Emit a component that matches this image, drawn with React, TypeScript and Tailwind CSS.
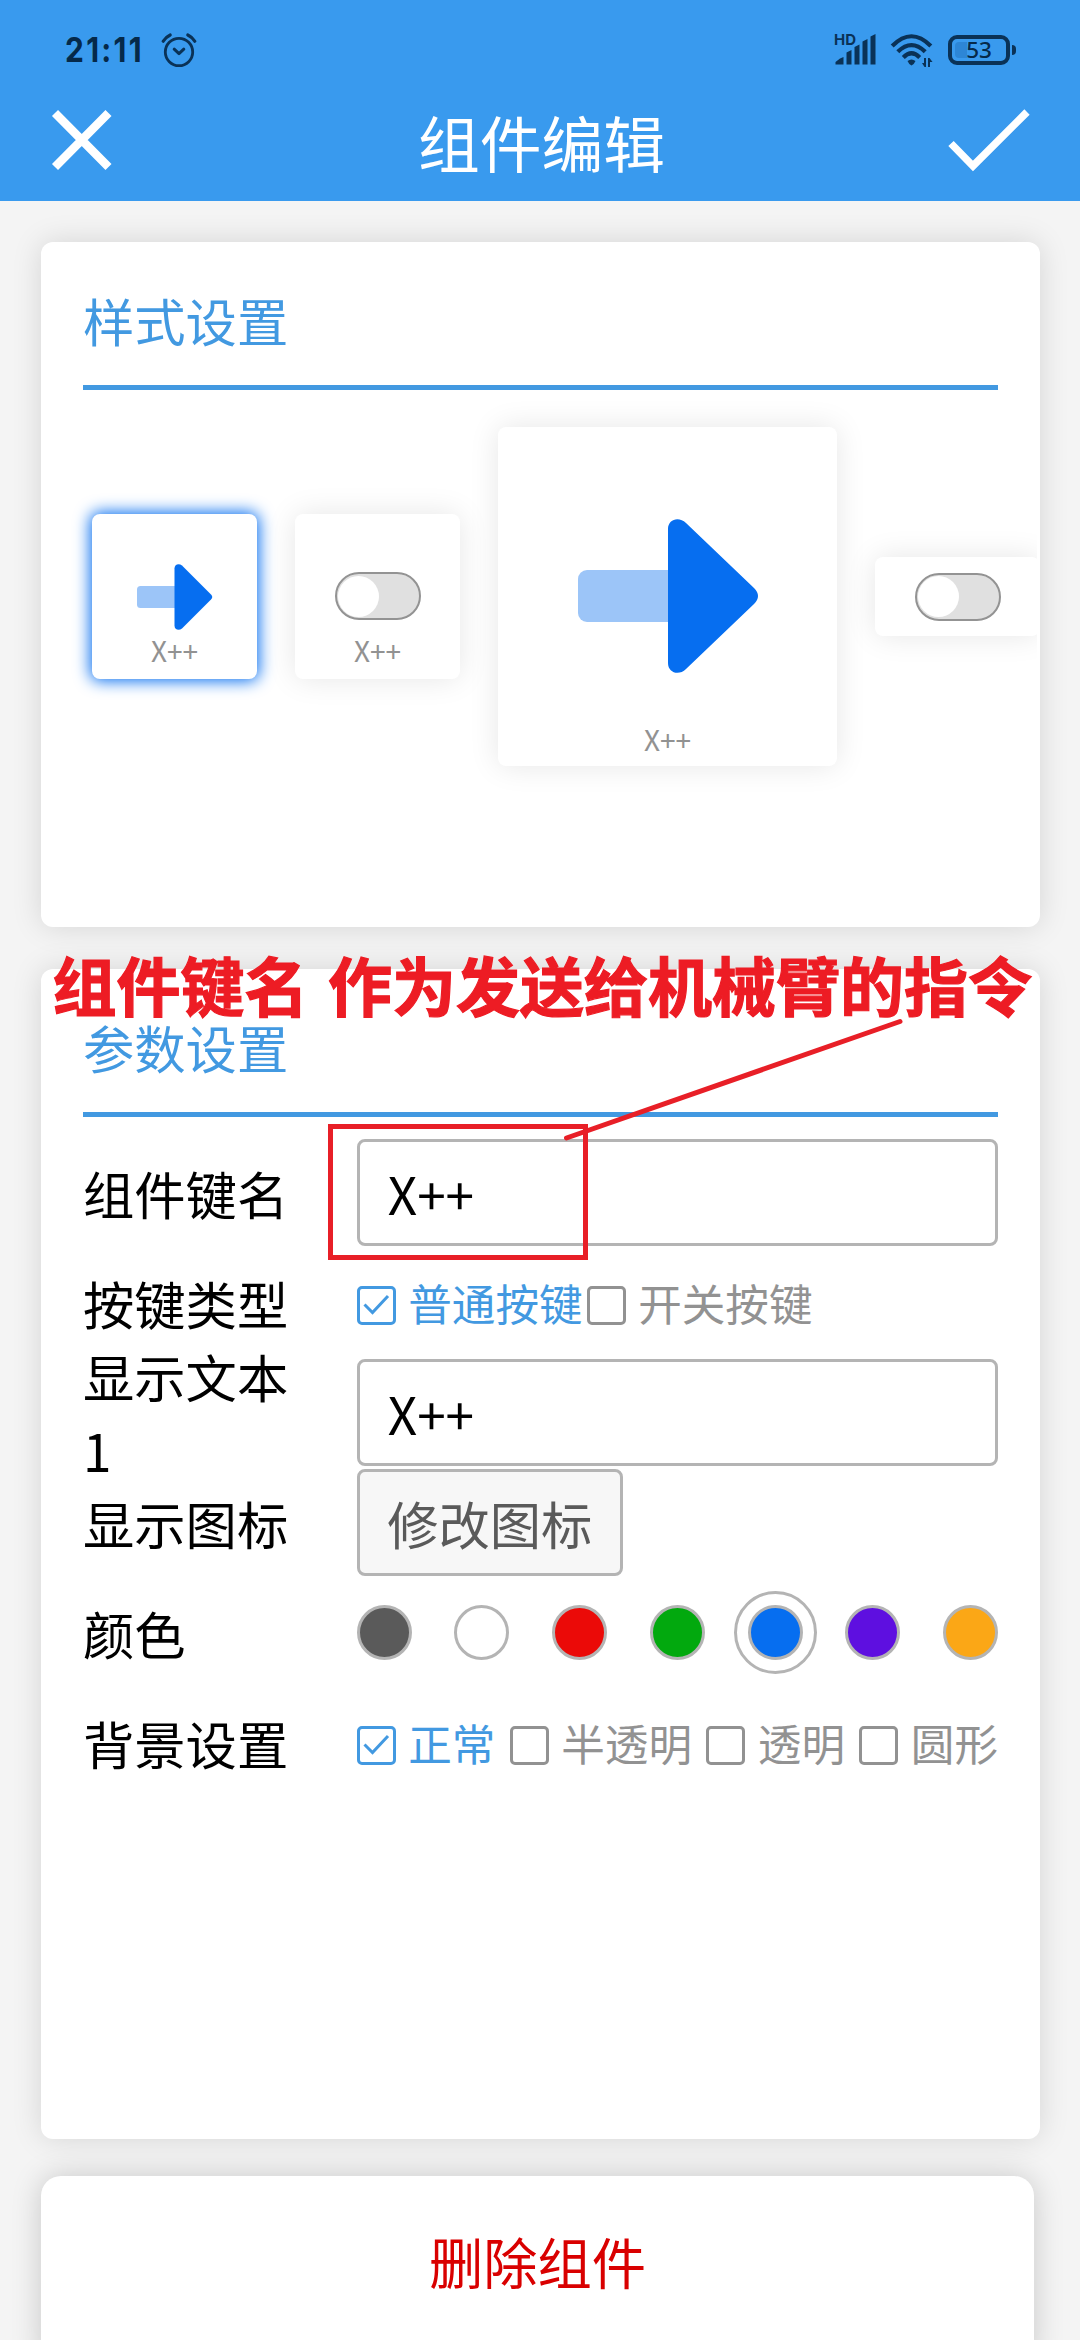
import type { ReactNode } from "react";

function StatusBar() {
  return (
    <div className="flex h-[100px] shrink-0 justify-between pl-[65px] pr-[64px] text-[#0a3257]">
      <div className="flex h-[100px] items-center">
        <span className="w-[96px] font-['Inter'] text-[34px] leading-[40px] font-bold text-[#05294a]">
          <span className="inline-block origin-left scale-x-[0.88] tracking-[2.6px]">21:11</span>
        </span>
        <svg width="36" height="36" viewBox="0 0 36 36" fill="none" stroke="currentColor" strokeLinecap="round" strokeLinejoin="round">
          <circle cx="18" cy="20" r="13.7" strokeWidth="2.8" />
          <path d="M13.2 17.2 18 21.6 22.8 17.2" strokeWidth="3" />
          <path d="M2.2 9.2Q4.6 5.2 9.2 3M26.8 3Q31.4 5.2 33.8 9.2" strokeWidth="3.2" />
        </svg>
      </div>
      <div className="flex h-[100px] items-center gap-[14px]">
        <svg width="44" height="46" viewBox="0 -5 44 46" fill="currentColor">
          <text x="2" y="13" fontFamily="Inter" fontSize="15" fontWeight="700" textLength="22">HD</text>
          <path d="M3.5 32.5V30L8 26.5 11.5 25V32.5ZM14.5 32.5V20.5L19.5 18V32.5ZM22.5 32.5V15L27.5 12.5V32.5ZM30.5 32.5V9.5L35.5 7V32.5ZM38.5 32.5V4.5L43.5 2V32.5Z" />
        </svg>
        <svg width="44" height="36" viewBox="0 0 44 36" fill="none" stroke="currentColor">
          <path d="M2.2 14Q21.5-5.5 40.8 14" strokeWidth="4.2" />
          <path d="M7.8 19.8Q21.5 6.4 35.2 19.8" strokeWidth="4.2" />
          <path d="M13.3 25.4Q21.5 17.2 29.7 25.4" strokeWidth="4.2" />
          <path d="M17.5 29Q21.5 26 25.5 29Q24 32.5 21.5 33.5Q19 32.5 17.5 29Z" fill="currentColor" stroke="none" />
          <path d="M36 26V35H34.5L32 31H34V26ZM38 35V26H39.5L42.5 30H40V35Z" fill="currentColor" stroke="none" />
        </svg>
        <div className="flex items-center gap-[2px]">
          <div className="relative flex h-[30px] w-[62px] items-center justify-center rounded-[9px] border-4 border-[#0a3257]">
            <div className="absolute top-[3px] left-[3px] h-4 w-3 rounded-l bg-[#2d86d6]" />
            <span className="relative font-['Noto_Sans'] text-[22.5px] leading-none font-medium text-[#05294a]">53</span>
          </div>
          <div className="h-[10px] w-1 rounded-r bg-[#0a3257]" />
        </div>
      </div>
    </div>
  );
}

function Header() {
  return (
    <header className="h-[201px] bg-[#399aee]">
      <StatusBar />
      <div className="flex h-[82px] items-center justify-between pr-[48px] pl-[51px]">
        <svg width="84" height="64" viewBox="0 0 84 64" fill="none" stroke="#fff" strokeWidth="8.5">
          <path d="M4 4 57.5 58M57.5 4 4 58" />
        </svg>
        <h1 className="text-[61.8px] leading-[82px] text-white">组件编辑</h1>
        <svg width="84" height="66" viewBox="0 0 84 66" fill="none" stroke="#fff" strokeWidth="7.5">
          <path d="M3 35.5 25 58 79 4" />
        </svg>
      </div>
    </header>
  );
}

function SectionTitle({ children }: { children: ReactNode }) {
  return (
    <h2 className="mx-[42px] h-[148px] border-b-[5px] border-[#4299e1] pt-[41px] text-[51.3px] leading-[74px] text-[#4299e1]">
      {children}
    </h2>
  );
}

function Toggle() {
  return (
    <div className="h-[48px] w-[86px] shrink-0 rounded-full border-2 border-[#939393] bg-[#e0e0e0] p-[1.5px]">
      <div className="size-[41px] rounded-full bg-white" />
    </div>
  );
}

function Arrow({ large = false }: { large?: boolean }) {
  if (large) {
    return (
      <svg width="180" height="154" viewBox="0 0 180 154">
        <rect y="51" width="110" height="52" rx="9" fill="#9cc5f8" />
        <path d="M90 10C90 0 101 -3 108 4L176 69Q184 77 176 85L108 150C101 157 90 154 90 144Z" fill="#066ef0" />
      </svg>
    );
  }
  return (
    <svg width="76" height="66" viewBox="0 0 76 66">
      <rect y="22" width="50" height="22" rx="3.5" fill="#9cc5f8" />
      <path d="M37.5 4.5C37.5 0 42 -1 45 1.5L74 30.5Q76.5 33 74 35.5L45 64.5C42 67 37.5 66 37.5 61.5Z" fill="#066ef0" />
    </svg>
  );
}

function StylePicker() {
  return (
    <div className="mr-[3px] flex h-[413px] items-center gap-[38px] overflow-hidden pl-[51px] text-center text-[28px] leading-[40px] text-[#929292]">
      <div className="flex size-[165px] shrink-0 flex-col items-center rounded-lg bg-white pt-[50px] shadow-[0_0_16px_2px_#066ef0]">
        <Arrow />
        <span>X++</span>
      </div>
      <div className="flex size-[165px] shrink-0 flex-col items-center rounded-lg bg-white pt-[58px] shadow-[0_0_30px_rgba(0,0,0,0.1)]">
        <Toggle />
        <span className="mt-[10px]">X++</span>
      </div>
      <div className="flex size-[339px] shrink-0 flex-col items-center rounded-lg bg-white pt-[92px] shadow-[0_0_30px_rgba(0,0,0,0.1)]">
        <Arrow large />
        <span className="mt-[46px]">X++</span>
      </div>
      <div className="flex h-[79px] w-[165px] shrink-0 items-center justify-center rounded-lg bg-white shadow-[0_0_30px_rgba(0,0,0,0.1)]">
        <Toggle />
      </div>
    </div>
  );
}

function Check({ label, checked = false }: { label: string; checked?: boolean }) {
  return (
    <div className={checked ? "flex items-center text-[#4299e1]" : "flex items-center text-[#929292]"}>
      <div className="mt-[6px] mr-[12.5px] flex size-[39px] items-center justify-center rounded-[5px] border-3 border-current">
        {checked && (
          <svg width="27" height="22" viewBox="0 0 27 22" fill="none" stroke="currentColor" strokeWidth="3">
            <path d="M1.5 10.5 9.5 18.5 25 2" />
          </svg>
        )}
      </div>
      <span className="text-[43.6px] leading-[64px]">{label}</span>
    </div>
  );
}

function Field({ label, children }: { label: string; children: ReactNode }) {
  return (
    <div className="flex h-[110px] items-center">
      <div className="w-[208px] pt-[2px] text-[51.3px] leading-[74px] text-black">{label}</div>
      <div className="ml-[66px] w-[642px]">{children}</div>
    </div>
  );
}

function TextBox({ value }: { value: string }) {
  return (
    <div className="h-[107px] rounded-lg border-3 border-[#b4b4b4] pl-[28px] text-[51.3px] leading-[101px] text-black">
      {value}
    </div>
  );
}

const swatches = [
  { id: "gray", fill: "bg-[#5a5a5a]" },
  { id: "white", fill: "bg-white" },
  { id: "red", fill: "bg-[#eb0a08]" },
  { id: "green", fill: "bg-[#02a90e]" },
  { id: "blue", fill: "bg-[#066ef0]" },
  { id: "purple", fill: "bg-[#5e0fe0]" },
  { id: "orange", fill: "bg-[#fba716]" },
];

function Annotation() {
  return (
    <div className="pointer-events-none absolute inset-0">
      <p className="absolute top-[937px] left-[52.5px] text-[64px] leading-[92px] font-bold whitespace-nowrap text-[#ed1c24] [word-spacing:5px] [-webkit-text-stroke:1.2px_#ed1c24]">
        组件键名 作为发送给机械臂的指令
      </p>
      <div className="absolute top-[1124px] left-[328px] h-[136px] w-[260px] border-5 border-[#e81f27]" />
      <svg className="absolute top-[1010px] left-[560px]" width="350" height="135" viewBox="0 0 350 135">
        <path d="M6.5 128 340 11.5" stroke="#e81f27" strokeWidth="5" strokeLinecap="round" />
      </svg>
    </div>
  );
}

export default function App() {
  return (
    <div className="relative h-[2340px] w-[1080px] overflow-hidden bg-[#f4f4f4] font-['Noto_Sans_CJK_SC',sans-serif]">
      <Header />
      <main className="pt-[41px] pl-[41px]">
        <section className="h-[685px] w-[999px] rounded-xl bg-white shadow-[0_0_30px_rgba(0,0,0,0.13)]">
          <SectionTitle>样式设置</SectionTitle>
          <StylePicker />
        </section>
        <section className="mt-[42px] h-[1170px] w-[999px] rounded-xl bg-white shadow-[0_0_30px_rgba(0,0,0,0.13)]">
          <SectionTitle>参数设置</SectionTitle>
          <div className="mx-[42px] pt-[20px]">
            <Field label="组件键名">
              <TextBox value="X++" />
            </Field>
            <Field label="按键类型">
              <div className="flex gap-1">
                <Check label="普通按键" checked />
                <Check label="开关按键" />
              </div>
            </Field>
            <Field label="显示文本1">
              <TextBox value="X++" />
            </Field>
            <Field label="显示图标">
              <button className="block h-[107px] w-[266px] rounded-lg border-3 border-[#b4b4b4] bg-[#f7f7f7] text-[51.3px] leading-[101px] text-[#5a5a5a]">
                修改图标
              </button>
            </Field>
            <Field label="颜色">
              <div className="flex items-center justify-between">
                {swatches.map((s) => (
                  <div
                    key={s.id}
                    className={
                      s.id === "blue"
                        ? "-m-[14px] flex size-[83px] items-center justify-center rounded-full border-3 border-[#b4b4b4]"
                        : "flex size-[55px] items-center justify-center"
                    }
                  >
                    <div className={`size-[55px] shrink-0 rounded-full border-3 border-[#b4b4b4] ${s.fill}`} />
                  </div>
                ))}
              </div>
            </Field>
            <Field label="背景设置">
              <div className="flex justify-between">
                <Check label="正常" checked />
                <Check label="半透明" />
                <Check label="透明" />
                <Check label="圆形" />
              </div>
            </Field>
          </div>
        </section>
        <button className="mt-[37px] flex h-[184px] w-[993px] justify-center rounded-t-[20px] bg-white pt-[45px] text-[54.3px] leading-[80px] text-[#d90000] shadow-[0_0_30px_rgba(0,0,0,0.18)]">
          删除组件
        </button>
      </main>
      <Annotation />
    </div>
  );
}
